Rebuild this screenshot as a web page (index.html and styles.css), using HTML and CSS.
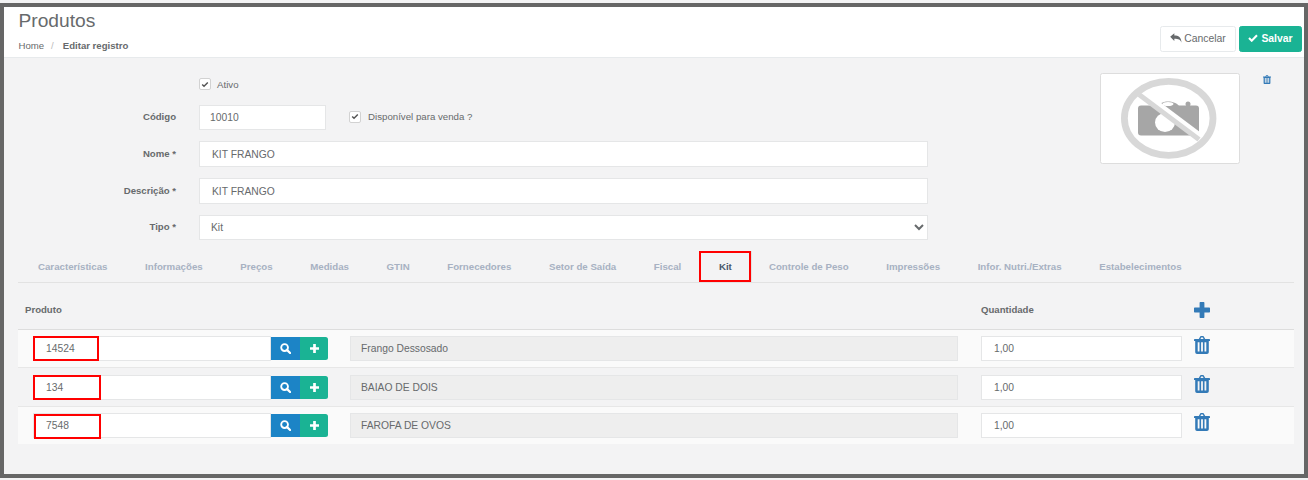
FILE: index.html
```html
<!DOCTYPE html>
<html lang="pt-BR">
<head>
<meta charset="utf-8">
<title>Produtos</title>
<link rel="stylesheet" href="styles.css">
</head>
<body>
<div class="frame">
  <header class="page-head">
    <div>
      <h2 class="title">Produtos</h2>
      <div class="crumbs"><span>Home</span><span class="sep">/</span><strong>Editar registro</strong></div>
    </div>
    <div class="actions">
      <button class="btn btn-white"><svg class="ico-reply" viewBox="0 0 14 12"><path fill="#676a6c" d="M0 4.600 5 .4v2.500c5 0 8.400 2 8.600 8.700-1.300-3.600-3.600-4.600-8.600-4.600v2.500z"/></svg>Cancelar</button>
      <button class="btn btn-green"><svg class="ico-check" viewBox="0 0 12 10"><path fill="none" stroke="#fff" stroke-width="2.600" d="M1 5l3.400 3.400L11 1.600"/></svg>Salvar</button>
    </div>
  </header>
  <main class="content">
    <section class="top">
      <form class="form">
        <div class="field field-check">
          <span></span>
          <label class="check"><span class="box"><svg viewBox="0 0 10 8"><path fill="none" stroke="#555" stroke-width="1.800" d="M1.500 4l2.300 2.300L8.500 1.500"/></svg></span>Ativo</label>
        </div>
        <div class="field">
          <label class="lbl">Código</label>
          <div class="inline">
            <input class="inp inp-code" value="10010">
            <label class="check"><span class="box"><svg viewBox="0 0 10 8"><path fill="none" stroke="#555" stroke-width="1.800" d="M1.500 4l2.300 2.300L8.500 1.500"/></svg></span>Disponível para venda ?</label>
          </div>
        </div>
        <div class="field">
          <label class="lbl">Nome *</label>
          <input class="inp inp-tall" value="KIT FRANGO">
        </div>
        <div class="field">
          <label class="lbl">Descrição *</label>
          <input class="inp inp-tall" value="KIT FRANGO">
        </div>
        <div class="field">
          <label class="lbl">Tipo *</label>
          <select class="inp sel"><option>Kit</option></select>
        </div>
      </form>
      <div class="photo">
        <svg viewBox="0 0 138 89" width="138" height="89">
          <rect x="37" y="31.500" width="61" height="30" rx="3" fill="#a6a6a6"/>
          <path d="M57 32c3-6 17-6 21 0z" fill="#a6a6a6"/>
          <ellipse cx="67" cy="30" rx="5.500" ry="2" fill="#fff"/>
          <circle cx="87" cy="30" r="2.500" fill="#a6a6a6"/>
          <ellipse cx="64" cy="48.500" rx="10" ry="9.500" fill="#fff"/>
          <path d="M39.500 18.500 99.500 63.500" stroke="#fff" stroke-width="8"/>
          <path d="M38 20.500 98 65.500" stroke="#d8d8d8" stroke-width="5"/>
          <ellipse cx="67.700" cy="44.300" rx="44.300" ry="37" fill="none" stroke="#d8d8d8" stroke-width="6.800"/>
        </svg>
      </div>
      <svg class="ico-del" viewBox="0 0 16 18"><use href="#trash"/></svg>
    </section>

    <nav class="tabs">
      <a class="tab">Características</a>
      <a class="tab">Informações</a>
      <a class="tab">Preços</a>
      <a class="tab">Medidas</a>
      <a class="tab">GTIN</a>
      <a class="tab">Fornecedores</a>
      <a class="tab">Setor de Saída</a>
      <a class="tab">Fiscal</a>
      <a class="tab tab-on">Kit<span class="mark mark-tab"></span></a>
      <a class="tab">Controle de Peso</a>
      <a class="tab">Impressões</a>
      <a class="tab">Infor. Nutri./Extras</a>
      <a class="tab">Estabelecimentos</a>
    </nav>

    <section class="table">
      <div class="row row-head">
        <div class="th th-prod">Produto</div>
        <div class="th">Quantidade</div>
        <svg class="ico-plus" viewBox="0 0 16 16"><path fill="#337ab7" d="M6.300 0h3.400a.7.7 0 0 1 .7.7v4.900h4.900a.7.7 0 0 1 .7.7v3.400a.7.7 0 0 1-.7.7h-4.900v4.900a.7.7 0 0 1-.7.7H6.300a.7.7 0 0 1-.7-.7v-4.900H.7a.7.7 0 0 1-.7-.7V6.300a.7.7 0 0 1 .7-.7h4.900V.7a.7.7 0 0 1 .7-.7z"/></svg>
      </div>
      <div class="row row-odd">
        <div class="group">
          <input class="inp inp-grow" value="14524">
          <button class="gbtn gbtn-blue"><svg viewBox="0 0 12 12"><use href="#search"/></svg></button>
          <button class="gbtn gbtn-green"><svg viewBox="0 0 10 10"><use href="#plus"/></svg></button>
          <span class="mark mark-a"></span>
        </div>
        <input class="inp inp-off" value="Frango Dessosado" readonly>
        <input class="inp inp-qty" value="1,00">
        <svg class="ico-trash" viewBox="0 0 16 18"><use href="#trash"/></svg>
      </div>
      <div class="row">
        <div class="group">
          <input class="inp inp-grow" value="134">
          <button class="gbtn gbtn-blue"><svg viewBox="0 0 12 12"><use href="#search"/></svg></button>
          <button class="gbtn gbtn-green"><svg viewBox="0 0 10 10"><use href="#plus"/></svg></button>
          <span class="mark mark-b"></span>
        </div>
        <input class="inp inp-off" value="BAIAO DE DOIS" readonly>
        <input class="inp inp-qty" value="1,00">
        <svg class="ico-trash" viewBox="0 0 16 18"><use href="#trash"/></svg>
      </div>
      <div class="row row-odd row-last">
        <div class="group">
          <input class="inp inp-grow" value="7548">
          <button class="gbtn gbtn-blue"><svg viewBox="0 0 12 12"><use href="#search"/></svg></button>
          <button class="gbtn gbtn-green"><svg viewBox="0 0 10 10"><use href="#plus"/></svg></button>
          <span class="mark mark-c"></span>
        </div>
        <input class="inp inp-off" value="FAROFA DE OVOS" readonly>
        <input class="inp inp-qty" value="1,00">
        <svg class="ico-trash" viewBox="0 0 16 18"><use href="#trash"/></svg>
      </div>
    </section>
  </main>
</div>
<svg class="defs" aria-hidden="true">
  <defs>
    <g id="trash" fill="#337ab7">
      <path fill-rule="evenodd" d="M4.800 3 5.900.9C6.100.4 6.500 0 7.100 0h1.800c.6 0 1 .4 1.200.9L11.200 3h4.100c.4 0 .7.300.7.700V5H14.800V16c0 1.200-.8 2-1.800 2H3c-1 0-1.800-.8-1.800-2V5H0V3.700C0 3.300.3 3 .7 3zM6.500 3h3L9 1.700c0-.1-.1-.2-.2-.2H7.200c-.1 0-.2.100-.2.200zM3.700 6.200V15.400H5.500V6.200zM7.100 6.200V15.400H8.900V6.200zM10.500 6.200V15.400H12.300V6.200z"/>
    </g>
    <g id="search">
      <circle cx="5" cy="5" r="3.700" fill="none" stroke="#fff" stroke-width="2"/>
      <path d="M7.800 7.800 11 11" stroke="#fff" stroke-width="2.400" stroke-linecap="round"/>
    </g>
    <path id="plus" fill="#fff" d="M3.500 0h3v3.500H10v3H6.500V10h-3V6.500H0v-3h3.500z"/>
  </defs>
</svg>
</body>
</html>
```
FILE: styles.css
```css
* { box-sizing: border-box; }
html, body { margin: 0; height: 100%; }
body {
  background: #f3f3f4;
  font-family: "Liberation Sans", Arial, sans-serif;
  color: #676a6c;
  font-size: 10.4px;
  overflow: hidden;
}
.frame {
  margin-top: 3px;
  height: 475px;
  border: 4px solid #666;
  background: #f3f3f4;
  overflow: hidden;
}
.page-head {
  height: 51px;
  background: #fff;
  border-bottom: 1px solid #e7eaec;
  padding: 0 2px 5px 14.500px;
  display: flex;
  justify-content: space-between;
  align-items: flex-end;
}
.title { margin: 0 0 8px; font-size: 19.200px; font-weight: 400; line-height: 22px; }
.crumbs { font-size: 9.600px; line-height: 12px; }
.sep { color: #bbb; margin: 0 9px 0 7px; }
.crumbs strong { font-weight: 700; }
.actions { display: flex; gap: 3px; }
.btn {
  height: 26px;
  border-radius: 2.500px;
  font: 10.400px "Liberation Sans", Arial, sans-serif;
  display: flex;
  align-items: center;
  justify-content: center;
  border: 1px solid #e7eaec;
  padding: 0 0 2px;
}
.btn-white { width: 76px; background: #fff; color: #676a6c; }
.btn-green { width: 63px; background: #1ab394; border-color: #1ab394; color: #fff; font-weight: 700; }
.ico-reply { width: 12px; height: 10px; margin-right: 2px; }
.ico-check { width: 10px; height: 8px; margin-right: 3px; }
.content { padding: 0 10px 0 14px; }
.top { display: flex; align-items: flex-start; padding-top: 15px; }
.form { width: 910px; display: grid; row-gap: 11px; }
.field { display: grid; grid-template-columns: 158px 729px; column-gap: 23px; align-items: center; }
.field-check { height: 21px; padding-top: 2px; }
.field-check .box { margin-right: 6px; }
.lbl { text-align: right; font-size: 9.600px; font-weight: 700; padding-bottom: 2px; }
.inline { display: flex; align-items: center; gap: 23px; }
.inline .check { padding-bottom: 2px; }
.check { display: flex; align-items: center; font-size: 9.700px; padding-bottom: 1px; }
.box {
  width: 12px; height: 12px;
  border: 1px solid #d2d2d2;
  border-radius: 2px;
  background: #fff;
  margin-right: 7px;
  display: flex;
  align-items: center;
  justify-content: center;
}
.box svg { width: 8px; height: 7px; }
.inp {
  display: block;
  width: 100%;
  height: 25px;
  border: 1px solid #e5e6e7;
  background: #fff;
  color: #676a6c;
  font: 10.300px "Liberation Sans", Arial, sans-serif;
  padding: 0 12px;
  border-radius: 0;
  outline: none;
}
.inp-code { width: 127px; flex: none; padding: 0 10px; }
.inp-tall { height: 26px; }
.sel { padding: 0 7px; }
.photo {
  margin-left: 172px;
  width: 140px;
  height: 91px;
  border: 1px solid #ddd;
  border-radius: 2.500px;
  background: #fff;
  flex: none;
}
.photo svg { display: block; }
.ico-del { width: 8px; height: 9px; margin: 2px 0 0 23px; flex: none; }
.tabs {
  display: flex;
  height: 32px;
  margin-top: 11px;
  padding-left: 1.200px;
  border-bottom: 1px solid #e2e2e2;
}
.tab {
  position: relative;
  height: 31px;
  line-height: 31px;
  padding: 0 18.800px;
  font-size: 9.700px;
  font-weight: 700;
  color: #a7b1c2;
  white-space: nowrap;
}
.tab-on { color: #495a6b; border-right: 1px solid #e2e2e2; margin-right: -1.500px; }
.mark { position: absolute; border: 2.500px solid #f00; pointer-events: none; }
.mark-tab { inset: 0 0 0 -1px; }
.mark-a { left: 0; top: 0; width: 66px; height: 25px; }
.mark-b { left: 0; top: 0; width: 68px; height: 25px; }
.mark-c { left: 1px; top: 1px; width: 67px; height: 25px; }
.row {
  display: grid;
  grid-template-columns: 317px 631px 213px 16px;
  padding: 6.200px 0 6.200px 15px;
  border-bottom: 1px solid #e7e7e7;
  align-items: start;
}
.row-odd { background: #fafafa; }
.row-last { border-bottom: 0; }
.row-head {
  height: 47px;
  padding: 6px 0 0 7px;
  grid-template-columns: 956px 213px 16px;
  align-items: center;
  border-bottom: 1px solid #ddd;
}
.th { font-size: 9.600px; font-weight: 700; }
.row-head .ico-plus { width: 16px; height: 16px; margin-top: 2px; }
.group { position: relative; display: flex; align-items: center; width: 295px; }
.inp-grow { flex: 1; min-width: 0; }
.gbtn {
  flex: none;
  height: 23px;
  border: 0;
  padding: 0;
  display: flex;
  align-items: center;
  justify-content: center;
}
.gbtn-blue { width: 29px; background: #1c84c6; }
.gbtn-green { width: 28px; background: #1ab394; border-radius: 0 2.500px 2.500px 0; }
.gbtn-blue svg { width: 11px; height: 11px; }
.gbtn-green svg { width: 9px; height: 9px; }
.inp-off { background: #eee; width: 608px; padding: 0 10px; }
.inp-qty { width: 201px; }
.ico-trash { width: 16px; height: 18px; }
.defs { position: absolute; width: 0; height: 0; }
```
